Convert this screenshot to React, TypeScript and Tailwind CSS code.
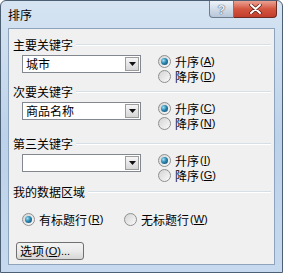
import React from "react"

type Opt = { label: string; k: string; checked?: boolean }

const Radio = ({ checked }: { checked?: boolean }) => (
  <span className="flex h-[13px] w-[13px] shrink-0 items-center justify-center rounded-full border border-[#8e8f8f] bg-linear-to-br from-[#d4d4d4] to-[#fafafa]">
    {checked && (
      <span className="h-[7px] w-[7px] rounded-full bg-[radial-gradient(circle_at_35%_35%,#9fe0f5_0%,#2a86b0_45%,#0d3e5a_100%)]" />
    )}
  </span>
)

const Mn = ({ k }: { k: string }) => (
  <span className="ml-px inline-block font-['Liberation_Sans',sans-serif] text-[11px] leading-none">
    (<span className="underline">{k}</span>)
  </span>
)

const RadioRow = ({ label, k, checked }: Opt) => (
  <div className="flex h-[15px] items-center gap-[4px]">
    <Radio checked={checked} />
    <span className="flex h-[12px] items-center leading-none">
      <span className="inline-block leading-none">{label}</span>
      <Mn k={k} />
    </span>
  </div>
)

const Combo = ({ value }: { value: string }) => (
  <div className="flex h-[18px] w-[119px] items-center border border-[#828790] bg-white">
    <span className="flex-1 pl-[3px] leading-none">{value}</span>
    <span className="mr-px flex h-[14px] w-[14px] items-center justify-center border border-[#9c9c9c] bg-linear-to-b from-[#f6f6f6] to-[#d6d6d6]">
      <svg width="7" height="4" viewBox="0 0 7 4">
        <path d="M0 0h7L3.5 4z" fill="#111" />
      </svg>
    </span>
  </div>
)

const Heading = ({ title }: { title: string }) => (
  <div className="flex h-[14px] items-center gap-[3px] pl-[4px] pr-[3px]">
    <span className="leading-none">{title}</span>
    <div className="h-[2px] flex-1 border-t border-b border-t-[#d5dfe5] border-b-white" />
  </div>
)

const KeySection = ({
  title,
  value,
  asc,
  desc,
  extra,
}: {
  title: string
  value: string
  asc: string
  desc: string
  extra?: string
}) => (
  <div className={extra}>
    <Heading title={title} />
    <div className="mt-[2px] flex items-start">
      <div className="pl-[13px] pt-px">
        <Combo value={value} />
      </div>
      <div className="ml-[17px] flex flex-col">
        <RadioRow label="升序" k={asc} checked />
        <RadioRow label="降序" k={desc} />
      </div>
    </div>
  </div>
)

export default function App() {
  return (
    <div className="flex h-[273px] w-[283px] flex-col rounded-t-[6px] border border-[#4d5f73] bg-linear-to-b from-[#d6e4f2] via-[#bcd2ea] to-[#c6d9ee] font-['Noto_Sans_CJK_SC',sans-serif] text-[12px] text-black">
      {/* title bar */}
      <div className="flex h-[27px] items-start">
        <span className="pl-[7px] pt-[8px] leading-none">排序</span>
        <div className="ml-auto mr-[5px] flex">
          <div className="flex h-[17px] w-[25px] items-center justify-center rounded-bl-[4px] border border-t-0 border-[#6d7b8c] bg-linear-to-b from-[#eef3f9] to-[#b7c6d8]">
            <span className="font-['Liberation_Sans',sans-serif] text-[13px] font-bold leading-none text-[#e9eef4] [text-shadow:0_0_1px_#3d4c60,0_0_1px_#3d4c60]">
              ?
            </span>
          </div>
          <div className="flex h-[17px] w-[43px] items-center justify-center rounded-br-[4px] border border-l-0 border-t-0 border-[#6e2a22] bg-linear-to-b from-[#eaa194] via-[#d4553f] to-[#c33d2c]">
            <svg width="13" height="10" viewBox="0 0 13 10">
              <path d="M2 1l9 8M11 1l-9 8" stroke="#5a1b12" strokeWidth="3.4" strokeLinecap="round" />
              <path d="M2 1l9 8M11 1l-9 8" stroke="#fff" strokeWidth="2" strokeLinecap="round" />
            </svg>
          </div>
        </div>
      </div>

      {/* client area */}
      <div className="mx-[7px] flex h-[237px] flex-col border border-[#8ea4bd] bg-[#f0f0f0]">
        <div className="pt-[9px]">
          <KeySection title="主要关键字" value="城市" asc="A" desc="D" />
          <KeySection title="次要关键字" value="商品名称" asc="C" desc="N" extra="mt-[1px]" />
          <KeySection title="第三关键字" value="" asc="I" desc="G" extra="mt-[6px]" />
          <div className="mt-[2px]">
            <Heading title="我的数据区域" />
            <div className="mt-[13px] flex items-center pl-[13px]">
              <div className="w-[102px]">
                <RadioRow label="有标题行" k="R" checked />
              </div>
              <RadioRow label="无标题行" k="W" />
            </div>
            <div className="mt-[15px] pl-[7px]">
              <button className="flex h-[18px] w-[68px] items-center rounded-[3px] border border-[#707070] bg-linear-to-b from-[#f2f2f2] via-[#ebebeb] to-[#d6d6d6] pl-[3px] leading-none">
                <span className="inline-block leading-none">选项</span>
                <Mn k="O" />
                <span className="inline-block font-['Liberation_Sans',sans-serif] text-[11px] leading-none">...</span>
              </button>
            </div>
          </div>
        </div>
      </div>
    </div>
  )
}
